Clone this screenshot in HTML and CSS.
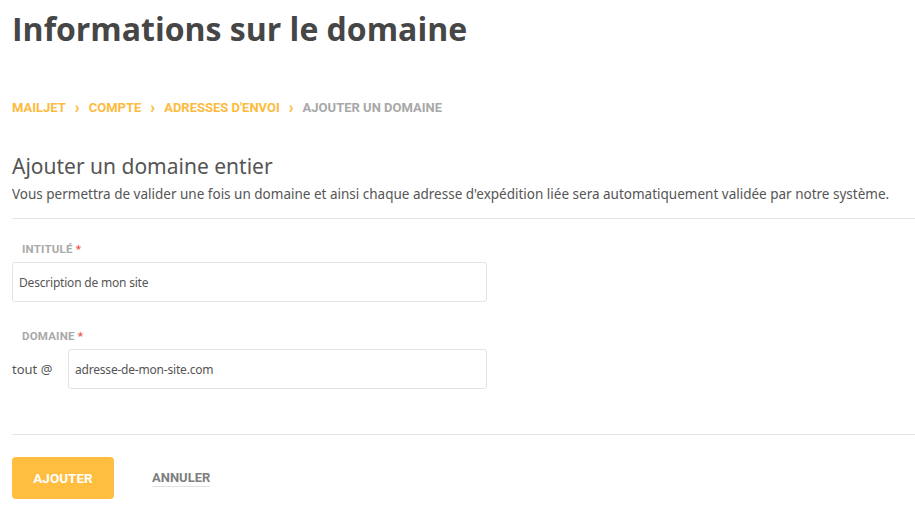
FILE: index.html
```html
<!DOCTYPE html>
<html lang="fr">
<head>
<meta charset="utf-8">
<link rel="stylesheet" href="styles.css">
</head>
<body>
<div class="page">
  <h1 class="title">Informations sur le domaine</h1>
  <nav class="crumbs">
    <a class="crumb">MAILJET</a><span class="sep">›</span>
    <a class="crumb">COMPTE</a><span class="sep">›</span>
    <a class="crumb">ADRESSES D'ENVOI</a><span class="sep">›</span>
    <span class="crumb current">AJOUTER UN DOMAINE</span>
  </nav>
  <section class="intro">
    <h2 class="subtitle">Ajouter un domaine entier</h2>
    <p class="desc">Vous permettra de valider une fois un domaine et ainsi chaque adresse d'expédition liée sera automatiquement validée par notre système.</p>
  </section>
  <form class="form">
    <div class="field">
      <label class="label">INTITULÉ <span class="req">*</span></label>
      <div class="row">
        <input class="input" type="text" value="Description de mon site">
      </div>
    </div>
    <div class="field">
      <label class="label">DOMAINE <span class="req">*</span></label>
      <div class="row">
        <span class="prefix">tout @</span>
        <input class="input" type="text" value="adresse-de-mon-site.com">
      </div>
    </div>
  </form>
  <div class="actions">
    <button class="btn-primary" type="button">AJOUTER</button>
    <a class="btn-link">ANNULER</a>
  </div>
</div>
</body>
</html>
```
FILE: styles.css
```css
* { box-sizing: border-box; }
html, body { margin: 0; background: #fff; }
body { font-family: "Noto Sans", sans-serif; color: #555; }
.page { padding-left: 12px; }
.title {
  margin: 0;
  padding-top: 7px;
  font-family: "Open Sans", sans-serif;
  font-weight: 700;
  font-size: 32px;
  line-height: 44px;
  color: #464646;
}
.crumbs {
  margin-top: 49px;
  display: flex;
  align-items: center;
  font-family: Roboto, sans-serif;
  font-weight: 700;
  font-size: 13px;
  line-height: 16px;
}
.crumb { color: #fcbb3c; }
.crumb.current { color: #a8a8a8; }
.sep { color: #fcbb3c; margin: 0 9px; font-size: 16px; font-weight: 900; }
.intro { margin-top: 36px; border-bottom: 1px solid #e5e5e5; padding-bottom: 14px; }
.subtitle { margin: 0; font-weight: 400; font-size: 21px; line-height: 28px; color: #555; }
.desc { margin: 4px 0 0; font-size: 13.5px; line-height: 20px; color: #555; white-space: nowrap; }
.form { border-bottom: 1px solid #e5e5e5; padding: 23px 0 45px; width: 903px; }
.field + .field { margin-top: 27px; }
.label {
  display: block;
  padding-left: 10px;
  font-family: Roboto, sans-serif;
  font-weight: 700;
  font-size: 11.5px;
  letter-spacing: 0.2px;
  line-height: 14px;
  color: #a9a9a9;
  margin-bottom: 6px;
}
.req { color: #e8544a; }
.row { display: flex; align-items: center; width: 475px; }
.prefix { width: 56px; flex: none; font-size: 13px; color: #555; }
.input {
  flex: 1;
  min-width: 0;
  height: 40px;
  border: 1px solid #e3e3e3;
  border-radius: 3px;
  padding: 0 6px;
  font-family: "Noto Sans", sans-serif;
  font-size: 12px;
  letter-spacing: -0.2px;
  color: #555;
  background: #fff;
}
.actions { display: flex; align-items: center; gap: 38px; padding-top: 22px; }
.btn-primary {
  width: 102px;
  height: 42px;
  border: 0;
  border-radius: 4px;
  background: #ffbe40;
  color: #fff;
  font-family: Roboto, sans-serif;
  font-weight: 700;
  font-size: 13.5px;
}
.btn-link {
  font-family: Roboto, sans-serif;
  font-weight: 700;
  font-size: 13px;
  color: #7e7e7e;
  border-bottom: 1px solid #e2e2e2;
  padding-bottom: 1px;
}
```
